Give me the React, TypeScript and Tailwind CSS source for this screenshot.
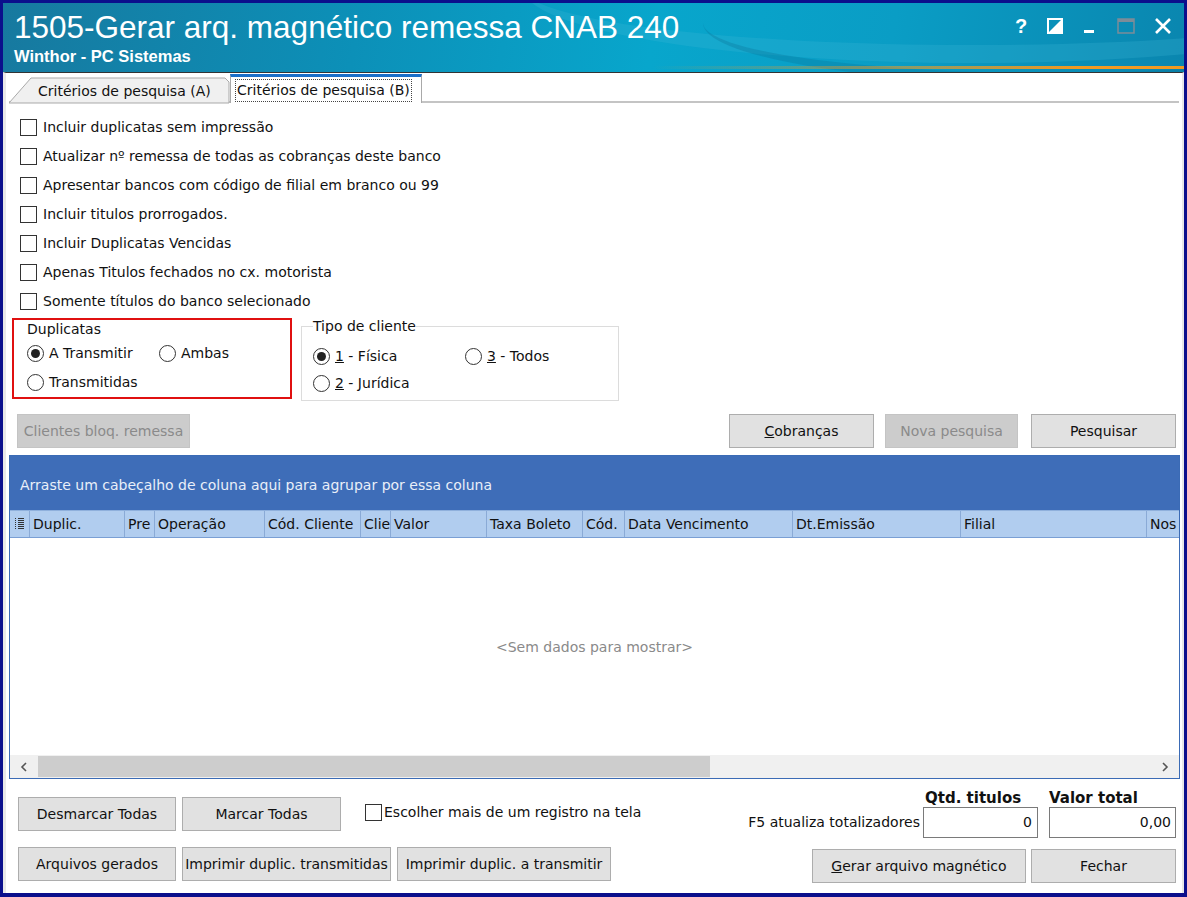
import React from "react";

const ui = { fontFamily: '"DejaVu Sans", "Liberation Sans", sans-serif' } as React.CSSProperties;
const arial = { fontFamily: '"Liberation Sans", Arial, sans-serif' } as React.CSSProperties;

const Check = ({ label, className = "" }: { label: string; className?: string }) => (
  <div className={`flex items-center h-[29px] ${className}`}>
    <span className="w-[17px] h-[17px] border border-[#333] bg-white mr-[6px] shrink-0" />
    <span className="text-[14px] text-[#111]">{label}</span>
  </div>
);

const Radio = ({ checked, children, className = "" }: { checked?: boolean; children: React.ReactNode; className?: string }) => (
  <div className={`flex items-center ${className}`}>
    <span className="w-[17px] h-[17px] rounded-full border border-[#333] bg-white flex items-center justify-center mr-[5px] shrink-0">
      {checked && <span className="w-[9px] h-[9px] rounded-full bg-[#222]" />}
    </span>
    <span className="text-[14px] text-[#111]">{children}</span>
  </div>
);

const Btn = ({ children, disabled, className = "" }: { children: React.ReactNode; disabled?: boolean; className?: string }) => (
  <div
    className={`h-[34px] flex items-center justify-center text-[14px] border whitespace-nowrap ${
      disabled ? "bg-[#cccccc] border-[#c4c4c4] text-[#8a8a8a]" : "bg-[#e1e1e1] border-[#adadad] text-[#111]"
    } ${className}`}
  >
    {children}
  </div>
);

const cols: [string, number][] = [
  ["Duplic.", 95],
  ["Pre", 30],
  ["Operação", 110],
  ["Cód. Cliente", 96],
  ["Clie", 30],
  ["Valor", 96],
  ["Taxa Boleto", 96],
  ["Cód.", 42],
  ["Data Vencimento", 168],
  ["Dt.Emissão", 168],
  ["Filial", 186],
  ["Nos", 40],
];

export default function App() {
  return (
    <div className="w-[1187px] h-[897px] bg-[#0b0f8c] p-[3px] pb-[4px] flex flex-col overflow-hidden" style={ui}>
      {/* Title bar */}
      <div className="relative h-[69px] shrink-0 bg-[linear-gradient(100deg,#17799f_0%,#0c90b8_30%,#08a6cc_55%,#0a9dc5_75%,#0a86af_100%)] overflow-hidden">
        <div className="absolute left-[520px] -top-[90px] w-[900px] h-[150px] rounded-[50%] border-b-[18px] border-[#3fb6d6]/25" />
        <div className="absolute left-[700px] -top-[40px] w-[700px] h-[120px] rounded-[50%] border-b-[10px] border-[#0a6f96]/30" />
        <div className="relative pl-[11px] pt-[6px]">
          <div className="text-white text-[31.5px] leading-[37px]" style={arial}>
            1505-Gerar arq. magnético remessa CNAB 240
          </div>
          <div className="text-white text-[16.5px] font-bold leading-[19px] mt-[1px]" style={arial}>
            Winthor - PC Sistemas
          </div>
        </div>
        <div className="absolute right-[12px] top-[8px] flex items-center gap-[19px] text-white">
          <span className="text-[20px] font-bold w-[14px] text-center" style={arial}>?</span>
          <svg width="16" height="16" viewBox="0 0 16 16">
            <rect x="1" y="1" width="14" height="14" fill="none" stroke="#fff" strokeWidth="2" />
            <polygon points="15,1 15,15 1,15" fill="#fff" />
          </svg>
          <svg width="16" height="16" viewBox="0 0 16 16">
            <rect x="2" y="12" width="10" height="3" fill="#fff" />
          </svg>
          <svg width="18" height="16" viewBox="0 0 18 16">
            <rect x="1" y="1" width="16" height="14" fill="none" stroke="#7c8c98" strokeWidth="1.5" />
            <rect x="1" y="1" width="16" height="3" fill="#7c8c98" />
          </svg>
          <svg width="18" height="18" viewBox="0 0 18 18">
            <path d="M2 2 L16 16 M16 2 L2 16" stroke="#fff" strokeWidth="2.6" />
          </svg>
        </div>
        <div className="absolute right-0 left-[650px] bottom-[3px] h-[3px] bg-[linear-gradient(90deg,rgba(240,150,30,0)_0%,rgba(240,155,35,0.6)_50%,#f09a22_80%,#f09a22_100%)]" />
      </div>

      {/* Content panel */}
      <div className="flex-1 bg-white border-l-[3px] border-r-[2px] border-[#e8e8e8] border-t border-t-[#333] flex flex-col">
        {/* Tabs */}
        <div className="relative h-[31px] flex items-end pl-[3px] pr-[3px] shrink-0">
          <div className="absolute left-[3px] right-[3px] bottom-[1px] h-[2px] bg-[#c4c4c4]" />
          <div className="relative w-[222px] h-[27px] flex items-center">
            <svg className="absolute inset-0" width="222" height="27" viewBox="0 0 222 27">
              <polygon points="0,26 22,1 216,1 220,5 220,26" fill="#f0f0f0" stroke="#a9a9a9" strokeWidth="1" />
            </svg>
            <span className="relative ml-[29px] text-[14px] text-[#111] mb-[-2px] whitespace-nowrap">Critérios de pesquisa (A)</span>
          </div>
          <div className="relative w-[192px] h-[29px] bg-white border-x border-[#a9a9a9] border-t-[3px] border-t-[#1a6fc9] flex items-center -ml-[1px] mb-[1px]">
            <span className="ml-[5px] px-[1px] text-[14px] text-[#111] outline-1 outline-dotted outline-[#444] whitespace-nowrap">Critérios de pesquisa (B)</span>
          </div>
        </div>

        {/* Checkboxes */}
        <div className="pl-[14px] pt-[8px] flex flex-col">
          <Check label="Incluir duplicatas sem impressão" className="h-[30px]" />
          <Check label="Atualizar nº remessa de todas as cobranças deste banco" />
          <Check label="Apresentar bancos com código de filial em branco ou 99" />
          <Check label="Incluir titulos prorrogados." />
          <Check label="Incluir Duplicatas Vencidas" />
          <Check label="Apenas Titulos fechados no cx. motorista" />
          <Check label="Somente títulos do banco selecionado" />
        </div>

        {/* Group boxes */}
        <div className="flex items-start pl-[6px] mt-[2px] gap-[9px]">
          <div className="w-[280px] h-[81px] border-2 border-[#e01010] pl-[13px] pt-[1px]">
            <div className="text-[14px] text-[#111] leading-[17px]">Duplicatas</div>
            <div className="flex mt-[5px]">
              <Radio checked className="w-[132px]">A Transmitir</Radio>
              <Radio>Ambas</Radio>
            </div>
            <Radio className="mt-[8px]">Transmitidas</Radio>
          </div>
          <fieldset className="w-[318px] h-[83px] border border-[#dcdcdc] pl-[11px]">
            <legend className="text-[14px] text-[#111] px-0 leading-[17px]">Tipo de cliente</legend>
            <div className="flex mt-[11px]">
              <Radio checked className="w-[152px]">
                <span className="underline">1</span>&nbsp;- Física
              </Radio>
              <Radio>
                <span className="underline">3</span>&nbsp;- Todos
              </Radio>
            </div>
            <Radio className="mt-[6px]">
              <span className="underline">2</span>&nbsp;- Jurídica
            </Radio>
          </fieldset>
        </div>

        {/* Action buttons */}
        <div className="flex items-center mt-[13px] pl-[11px] pr-[6px]">
          <Btn disabled className="w-[173px]">Clientes bloq. remessa</Btn>
          <div className="flex-1" />
          <Btn className="w-[145px]">
            <span><span className="underline">C</span>obranças</span>
          </Btn>
          <Btn disabled className="w-[133px] ml-[11px]">Nova pesquisa</Btn>
          <Btn className="w-[145px] ml-[13px]">Pesquisar</Btn>
        </div>

        {/* Grid */}
        <div className="ml-[3px] mr-[2px] mt-[7px] h-[324px] border border-[#3b6bb5] flex flex-col shrink-0">
          <div className="h-[54px] bg-[#3e6db8] flex items-center pl-[10px] pt-[4px] text-[14px] text-[#e9eff9]">
            Arraste um cabeçalho de coluna aqui para agrupar por essa coluna
          </div>
          <div className="h-[28px] bg-[#b1cdef] flex border-t border-[#8fb0dc] border-b border-b-[#7a9fd4] overflow-hidden">
            <div className="w-[20px] shrink-0 flex items-center justify-center border-r border-[#8aaad6]">
              <svg width="9" height="12" viewBox="0 0 9 12">
                {[1, 3, 5, 7, 9, 11].map((y) => (
                  <g key={y}>
                    <rect x="0" y={y - 1} width="1" height="1" fill="#333" />
                    <rect x="3" y={y - 1} width="6" height="1" fill="#333" />
                  </g>
                ))}
              </svg>
            </div>
            {cols.map(([n, w]) => (
              <div
                key={n}
                style={{ width: w }}
                className="shrink-0 flex items-center pl-[3px] text-[14px] text-[#111] border-r border-[#8aaad6] whitespace-nowrap overflow-hidden"
              >
                {n}
              </div>
            ))}
          </div>
          <div className="flex-1 bg-white flex items-center justify-center text-[14px] text-[#8a8a8a] pt-[2px]">
            &lt;Sem dados para mostrar&gt;
          </div>
          <div className="h-[23px] bg-[#f0f0f0] flex items-center">
            <div className="w-[28px] flex items-center justify-center">
              <svg width="8" height="10" viewBox="0 0 8 10">
                <path d="M6 1 L2 5 L6 9" stroke="#555" strokeWidth="1.6" fill="none" />
              </svg>
            </div>
            <div className="w-[672px] h-[21px] bg-[#cdcdcd]" />
            <div className="flex-1" />
            <div className="w-[28px] flex items-center justify-center">
              <svg width="8" height="10" viewBox="0 0 8 10">
                <path d="M2 1 L6 5 L2 9" stroke="#555" strokeWidth="1.6" fill="none" />
              </svg>
            </div>
          </div>
        </div>

        {/* Bottom area */}
        <div className="flex pl-[12px] pr-[6px] mt-[4px]">
          <div className="flex flex-col">
            <div className="flex items-center mt-[14px]">
              <Btn className="w-[158px]">Desmarcar Todas</Btn>
              <Btn className="w-[159px] ml-[6px]">Marcar Todas</Btn>
              <div className="flex items-center ml-[24px] -mt-[4px]">
                <span className="w-[17px] h-[17px] border border-[#333] bg-white mr-[2px]" />
                <span className="text-[14px] text-[#111] whitespace-nowrap">Escolher mais de um registro na tela</span>
              </div>
            </div>
            <div className="flex items-center mt-[16px]">
              <Btn className="w-[158px]">Arquivos gerados</Btn>
              <Btn className="w-[209px] ml-[6px]">Imprimir duplic. transmitidas</Btn>
              <Btn className="w-[214px] ml-[6px]">Imprimir duplic. a transmitir</Btn>
            </div>
          </div>
          <div className="flex-1 flex flex-col items-end mt-[7px]">
            <div className="flex">
              <div className="w-[115px] text-[15px] font-bold text-[#111] leading-[17px] pl-[2px] whitespace-nowrap">Qtd. titulos</div>
              <div className="w-[127px] ml-[11px] text-[15px] font-bold text-[#111] leading-[17px] whitespace-nowrap">Valor total</div>
            </div>
            <div className="flex items-center">
              <div className="mr-[3px] text-[14px] text-[#111] whitespace-nowrap">F5 atualiza totalizadores</div>
              <div className="w-[115px] h-[31px] border border-[#7a7a7a] bg-white flex items-center justify-end pr-[5px] text-[14px] text-[#111]">0</div>
              <div className="w-[127px] ml-[11px] h-[31px] border border-[#7a7a7a] bg-white flex items-center justify-end pr-[4px] text-[14px] text-[#111]">0,00</div>
            </div>
            <div className="flex mt-[11px]">
              <Btn className="w-[214px]">
                <span><span className="underline">G</span>erar arquivo magnético</span>
              </Btn>
              <Btn className="w-[145px] ml-[5px]">Fechar</Btn>
            </div>
          </div>
        </div>
      </div>
    </div>
  );
}
